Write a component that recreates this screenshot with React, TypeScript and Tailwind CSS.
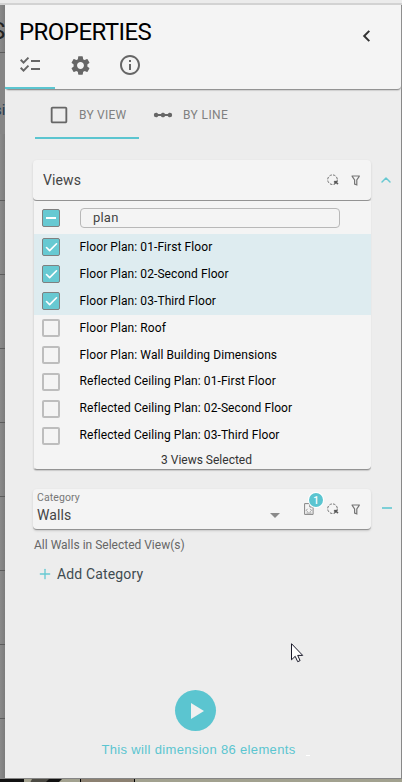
import { Check, ChevronUp, Plus } from 'lucide-react';
import { MdChecklist, MdSettings, MdInfoOutline, MdLinearScale, MdCheckBoxOutlineBlank } from 'react-icons/md';

const views = [
  { name: 'Floor Plan: 01-First Floor', checked: true },
  { name: 'Floor Plan: 02-Second Floor', checked: true },
  { name: 'Floor Plan: 03-Third Floor', checked: true },
  { name: 'Floor Plan: Roof', checked: false },
  { name: 'Floor Plan: Wall Building Dimensions', checked: false },
  { name: 'Reflected Ceiling Plan: 01-First Floor', checked: false },
  { name: 'Reflected Ceiling Plan: 02-Second Floor', checked: false },
  { name: 'Reflected Ceiling Plan: 03-Third Floor', checked: false },
];

function SelectIcon() {
  return (
    <svg width="12" height="12" viewBox="0 0 12 12" fill="none" stroke="#707070" strokeWidth="1">
      <circle cx="5.5" cy="5.7" r="4.8" strokeDasharray="2.5 1.27" />
      <path d="M7 7h3.8L9.8 8l1.5 1.5-1 1L8.8 9 7.6 10.4z" fill="#555" strokeWidth=".3" />
    </svg>
  );
}

function FilterIcon() {
  return (
    <svg width="10" height="11" viewBox="0 0 10 11" fill="none" stroke="#757575" strokeWidth="1.2">
      <path d="M.6 1h8.2M1 1.2 3.6 5v4.1l2.2.8V5l2.6-3.8" />
    </svg>
  );
}

function FileIcon() {
  return (
    <svg width="10" height="12" viewBox="0 0 10 12" fill="none" stroke="#858585" strokeWidth="1">
      <path d="M.6.6h5.3l3.2 3.2v7.6H.6zM5.8.8V4H9" />
      <path d="m3.6 5.8-1.4 1.5 1.4 1.5M6.1 5.8l1.4 1.5-1.4 1.5M2.5 10h5" strokeWidth=".8" />
    </svg>
  );
}

function Checkbox({ checked }: { checked: boolean }) {
  if (!checked) {
    return <span className="h-[18px] w-[18px] rounded-[2px] border-2 border-[#bdbdbd]" />;
  }
  return (
    <span className="flex h-[18px] w-[18px] items-center justify-center rounded-[2px] border border-[#808080] bg-[#67c9d2] text-white">
      <Check size={15} strokeWidth={2.6} className="shrink-0" />
    </span>
  );
}

export default function App() {
  return (
    <div className="relative flex h-[782px] w-[402px] flex-col overflow-hidden bg-[#a2a18f] font-[Roboto,sans-serif] text-[#444]">
      <div className="h-[5px] shrink-0 border-b-2 border-[#d2d2d2] bg-[#ebebeb]" />

      <div className="flex h-[773px] shrink-0">
        {/* Page behind the drawer */}
        <div className="relative flex w-[5px] shrink-0 flex-col overflow-hidden bg-gradient-to-r from-[#8a8a8a] to-[#7c7c7c]">
          <div className="h-[48px] shrink-0 border-b border-[#5c5c5c]" />
          <div className="h-[81px] shrink-0 bg-[#858585]" />
          <div className="h-[67px] shrink-0 border-b border-[#5c5c5c]" />
          {[0, 1, 2, 3, 4, 5, 6].map((n) => (
            <div key={n} className="h-[74px] shrink-0 border-b border-[#5c5c5c]" />
          ))}
          <span className="absolute -left-[9px] top-[14px] text-[24px] leading-6 text-[#222]">S</span>
          <span className="absolute -left-[6px] top-[95px] text-[15px] leading-5 text-[#26394f]">si</span>
        </div>

        {/* Drawer */}
        <div className="flex w-[397px] flex-col border-r border-[#888] bg-[#ededed]">
          <header className="flex h-[85px] shrink-0 flex-col justify-between rounded-b border-b border-[#939393] bg-[#f4f4f4] shadow-[0_1px_1px_#cfcfcf]">
            <div className="flex items-center justify-between pl-[14px] pr-[30px] pt-[10px]">
              <h1 className="text-[24px] leading-[34px] tracking-[-0.55px] text-black">PROPERTIES</h1>
              <svg width="9" height="12" viewBox="0 0 9 12" className="mt-[7px]" fill="none" stroke="#333" strokeWidth="2">
                <path d="M7.3.9 2.2 6l5.1 5.1" />
              </svg>
            </div>
            <nav className="flex text-[#666]">
              <div className="flex h-[35px] w-[50px] justify-center border-b-2 border-[#5bc5d0]">
                <MdChecklist size={24} className="-mt-px" />
              </div>
              <div className="flex w-[50px] justify-center"><MdSettings size={23} /></div>
              <div className="flex w-[50px] justify-center"><MdInfoOutline size={24} className="-mt-px" /></div>
            </nav>
          </header>

          <div className="mt-[2px] flex h-[47px] shrink-0 pl-[30px] text-[12px] text-[#808080]">
            <div className="flex w-[104px] items-center border-b-2 border-[#5bc5d0] pl-[13px]">
              <MdCheckBoxOutlineBlank size={22} className="text-[#666]" />
              <span className="ml-[9px] tracking-[0.25px]">BY VIEW</span>
            </div>
            <div className="flex items-center pl-[13px] pb-[2px]">
              <MdLinearScale size={22} className="text-[#666]" />
              <span className="ml-[9px] tracking-[0.4px]">BY LINE</span>
            </div>
          </div>

          {/* Views */}
          <section className="mt-[21px] flex pl-[28px]">
            <div className="w-[338px]">
              <div className="flex h-[41px] items-center rounded border-b border-[#939393] bg-[#f4f4f4] pl-[10px] pr-[10px] shadow-[0_1px_2px_#c9c9c9]">
                <span className="flex-1 text-[14px] tracking-[0.1px]">Views</span>
                <SelectIcon />
                <span className="ml-[12px]"><FilterIcon /></span>
              </div>
              <div className="flex h-[269px] flex-col rounded-b border-b border-l border-b-[#939393] border-l-[#dedede] bg-[#f4f4f4] shadow-[0_1px_1px_#c9c9c9]">
                <div className="flex h-[33px] shrink-0 items-center pl-[8px]">
                  <span className="flex h-[18px] w-[18px] items-center justify-center rounded-[2px] border border-[#808080] bg-[#67c9d2]">
                    <span className="h-[2px] w-[10px] bg-white" />
                  </span>
                  <div className="ml-[20px] flex h-[20px] w-[260px] items-center rounded-[4px] border border-[#b8b8b8] pl-[12px] text-[13px] tracking-[0.2px]">
                    plan
                  </div>
                </div>
                {views.map((view) => (
                  <div
                    key={view.name}
                    className={`flex h-[26.9px] shrink-0 items-center pl-[8px] text-[12px] tracking-[0.08px] text-black ${view.checked ? 'bg-[#deecf0]' : ''}`}
                  >
                    <Checkbox checked={view.checked} />
                    <span className="ml-[19.6px] -mt-px">{view.name}</span>
                  </div>
                ))}
                <div className="pl-[8px] pt-[3px] text-center text-[12px] leading-4 text-[#333]">3 Views Selected</div>
              </div>
            </div>
            <ChevronUp size={16} className="ml-[7px] mt-[12px] text-[#67c9d2]" strokeWidth={2.2} />
          </section>

          {/* Category */}
          <section className="mt-[19px] flex pl-[28px]">
            <div className="flex h-[41px] w-[338px] items-center rounded border-b border-[#939393] bg-[#f4f4f4] pl-[4px] pr-[10px] shadow-[0_1px_2px_#c9c9c9]">
              <div className="flex-1 pb-[2px]">
                <div className="text-[10.5px] leading-[14px] tracking-[0.1px] text-[#777]">Category</div>
                <div className="text-[14px] leading-[20px] tracking-[0.1px]">Walls</div>
              </div>
              <svg width="10" height="5" viewBox="0 0 10 5" className="mr-[24px] mt-[12px]" fill="#8a8a8a">
                <path d="M0 0h10L5 5z" />
              </svg>
              <div className="relative mr-[13px]">
                <FileIcon />
                <span className="absolute -top-[10px] left-[5px] flex h-[14px] w-[14px] items-center justify-center rounded-full bg-[#5bc5d0] text-[10px] font-medium text-white ring-1 ring-white">
                  1
                </span>
              </div>
              <SelectIcon />
              <span className="ml-[12px]"><FilterIcon /></span>
            </div>
            <span className="ml-[11px] mt-[18px] h-[2px] w-[10px] bg-[#7dcfd7]" />
          </section>

          <p className="pl-[29px] pt-[7px] text-[12px] leading-4 text-[#666]">All Walls in Selected View(s)</p>
          <button className="mt-[11px] flex items-center pl-[32px] text-[14px] leading-5 tracking-[0.15px] text-[#3f4b50]">
            <Plus size={16} strokeWidth={2} className="mr-[4px] text-[#67c9d2]" />
            Add Category
          </button>

          <div className="mt-auto flex flex-col items-center pb-[20px] pr-[15px]">
            <button className="flex h-[41px] w-[41px] items-center justify-center rounded-full bg-[#5bc5d0]">
              <svg width="13" height="16" viewBox="0 0 13 16" className="ml-[3px]" fill="#f0f0f0">
                <path d="M0 0l13 8L0 16z" />
              </svg>
            </button>
            <p className="mt-[11px] pl-[6px] font-['Liberation_Sans',sans-serif] text-[13px] leading-4 tracking-[0.34px] text-[#5bc5d0]">
              This will dimension 86 elements
            </p>
          </div>
        </div>
      </div>

      {/* Drawing canvas showing under the drawer */}
      <div className="flex h-[4px] border-t border-[#858585]">
        <div className="w-[24px] bg-[#111]" />
        <div className="flex w-[56px]">
          <svg width="56" height="4" viewBox="0 0 56 4">
            <path d="M8 0h20l-4 4H6z" fill="#4c4a43" />
            <path d="M25 0h13l-4 4H21z" fill="#111" />
          </svg>
        </div>
        <div className="w-[55px] border-x border-black bg-[#8c8171]" />
      </div>

      <span className="absolute left-[306px] top-[755px] h-px w-[4px] bg-white" />
      <svg className="absolute left-[291px] top-[643px]" width="13" height="20" viewBox="0 0 13 20" fill="#fff" stroke="#1a1a2a" strokeWidth="1">
        <path d="M.5.7v16.1l3.7-3.5 2.5 5.4 2.4-1.1-2.4-5.2h5z" />
      </svg>
    </div>
  );
}
